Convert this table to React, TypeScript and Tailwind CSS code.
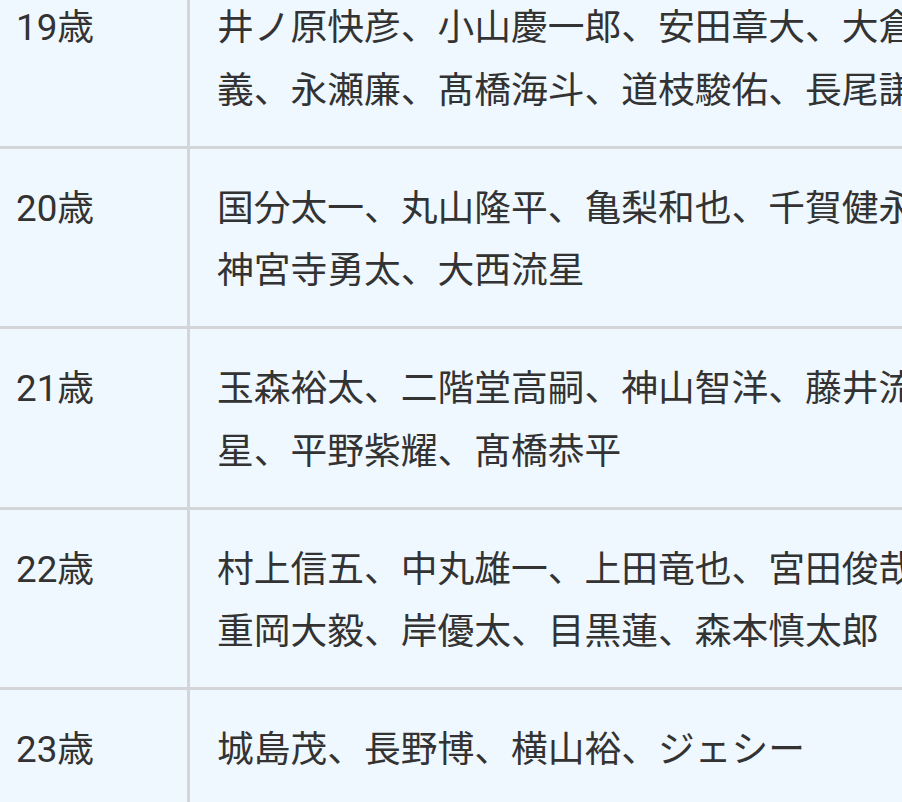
import React from "react";

const rows: { age: string; names: string }[] = [
  { age: "19歳", names: "井ノ原快彦、小山慶一郎、安田章大、大倉忠義、永瀬廉、髙橋海斗、道枝駿佑、長尾謙杜" },
  { age: "20歳", names: "国分太一、丸山隆平、亀梨和也、千賀健永、神宮寺勇太、大西流星" },
  { age: "21歳", names: "玉森裕太、二階堂高嗣、神山智洋、藤井流星、平野紫耀、髙橋恭平" },
  { age: "22歳", names: "村上信五、中丸雄一、上田竜也、宮田俊哉、重岡大毅、岸優太、目黒蓮、森本慎太郎" },
  { age: "23歳", names: "城島茂、長野博、横山裕、ジェシー" },
];

export default function App() {
  return (
    <div className="w-[902px] h-[802px] overflow-hidden bg-[#f0f8ff]">
      <div
        className="-mt-[32px] w-[1000px] text-[#333333] text-[36.75px] leading-[62.5px]"
        style={{ fontFamily: 'Roboto, "Noto Sans CJK JP", sans-serif' }}
      >
        {rows.map((r) => (
          <div key={r.age} className="flex border-b-[3px] border-[#d3d5d8]">
            <div className="w-[190px] shrink-0 border-r-[3px] border-[#d3d5d8] pl-[16px] pt-[29px] pb-[23.5px]">
              {r.age}
            </div>
            <div className="w-[790px] shrink-0 pl-[27px] pt-[29px] pb-[23.5px]">
              {r.names}
            </div>
          </div>
        ))}
      </div>
    </div>
  );
}
